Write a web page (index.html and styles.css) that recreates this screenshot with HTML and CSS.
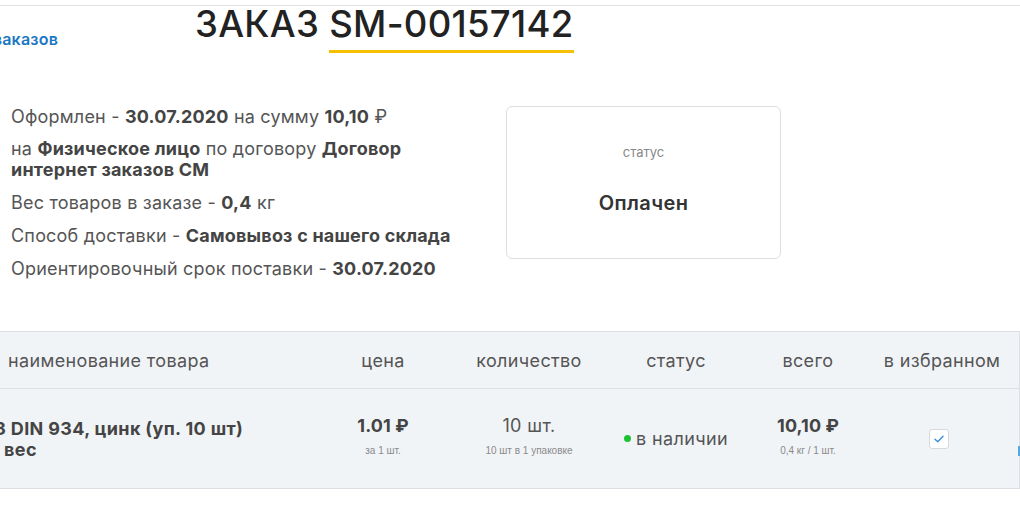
FILE: index.html
```html
<!DOCTYPE html>
<html lang="ru">
<head>
<meta charset="utf-8">
<title>Заказ SM-00157142</title>
<link rel="stylesheet" href="styles.css">
</head>
<body>
<div class="topbar"></div>
<div class="head">
  <div class="back"><a href="#">Вернуться к списку заказов</a></div>
  <h1 class="title">ЗАКАЗ <span class="num">SM-00157142</span></h1>
</div>

<div class="info">
  <div class="details">
    <p>Оформлен - <b>30.07.2020</b> на сумму <b>10,10</b> ₽</p>
    <p>на <b>Физическое лицо</b> по договору <b>Договор интернет заказов СМ</b></p>
    <p>Вес товаров в заказе - <b>0,4</b> кг</p>
    <p>Способ доставки - <b>Самовывоз с нашего склада</b></p>
    <p>Ориентировочный срок поставки - <b>30.07.2020</b></p>
  </div>
  <div class="status-card">
    <div class="status-label">статус</div>
    <div class="status-value">Оплачен</div>
  </div>
</div>

<div class="table">
  <div class="row head-row">
    <div class="cell c-name">наименование товара</div>
    <div class="cell c-price">цена</div>
    <div class="cell c-qty">количество</div>
    <div class="cell c-status">статус</div>
    <div class="cell c-total">всего</div>
    <div class="cell c-fav">в избранном</div>
  </div>
  <div class="row item-row">
    <div class="cell c-name">
      <div class="name-text">
        <div>Гайка М3 DIN 934, цинк (уп. 10 шт)</div>
        <div>Гайка на вес</div>
      </div>
    </div>
    <div class="cell c-price stack">
      <div class="big bold">1.01 ₽</div>
      <div class="small">за 1 шт.</div>
    </div>
    <div class="cell c-qty stack">
      <div class="big">10 шт.</div>
      <div class="small">10 шт в 1 упаковке</div>
    </div>
    <div class="cell c-status">
      <span class="dot"></span><span class="avail">в наличии</span>
    </div>
    <div class="cell c-total stack">
      <div class="big bold">10,10 ₽</div>
      <div class="small">0,4 кг / 1 шт.</div>
    </div>
    <div class="cell c-fav">
      <span class="check">
        <svg width="10" height="8" viewBox="0 0 10 8"><path d="M1 4.2 L3.8 6.8 L9 1.2" fill="none" stroke="#3b8fd6" stroke-width="1.4" stroke-linecap="round" stroke-linejoin="round"/></svg>
      </span>
    </div>
    <span class="edge-tab"></span>
  </div>
</div>
</body>
</html>
```

FILE: styles.css
```css
* { box-sizing: border-box; }
html, body { margin: 0; padding: 0; }
body {
  width: 1020px;
  height: 521px;
  overflow: hidden;
  background: #fff;
  font-family: "Inter", "Open Sans", "Liberation Sans", sans-serif;
  color: #555;
}

.topbar {
  height: 6px;
  border-bottom: 1px solid #e2e2e2;
}

.head {
  display: flex;
  align-items: flex-start;
  height: 58px;
}
.back {
  width: 58px;
  display: flex;
  justify-content: flex-end;
  white-space: nowrap;
  padding-top: 23px;
}
.back a {
  color: #1b78c2;
  font-weight: 600;
  font-size: 16px;
  letter-spacing: 0.2px;
  text-decoration: none;
}
.title {
  margin: 0 0 0 137px;
  font-size: 36.5px;
  font-weight: 500;
  line-height: 36px;
  color: #222;
  letter-spacing: 0.3px;
  white-space: nowrap;
}
.title .num {
  display: inline-block;
  border-bottom: 3px solid #f6c000;
  padding-bottom: 8px;
}

.info {
  display: flex;
  align-items: flex-start;
  padding-top: 42px;
  height: 267px;
}
.details {
  width: 480px;
  padding-left: 11px;
  font-size: 18px;
  letter-spacing: 0.2px;
  line-height: 21px;
  color: #555;
}
.details p { margin: 0 0 12px; }
.details p:first-child { margin-bottom: 11px; }
.details b { font-weight: 700; color: #444; }

.status-card {
  margin-left: 26px;
  width: 275px;
  height: 153px;
  border: 1px solid #dedede;
  border-radius: 6px;
  display: flex;
  flex-direction: column;
  align-items: center;
  padding-top: 37px;
}
.status-label {
  font-size: 13px;
  color: #888;
}
.status-value {
  margin-top: 31px;
  font-size: 20px;
  letter-spacing: 0.4px;
  font-weight: 600;
  color: #333;
}

.table {
  margin-left: -20px;
  width: 1040px;
  background: #f1f4f7;
  border-top: 1px solid #dcdfe3;
  border-right: 1px solid #dcdfe3;
}
.row {
  display: flex;
  border-bottom: 1px solid #dcdfe3;
  position: relative;
}
.head-row { height: 57px; }
.item-row { height: 100px; }
.cell {
  display: flex;
  align-items: center;
  justify-content: center;
  white-space: nowrap;
  font-size: 18px;
  letter-spacing: 0.35px;
  color: #555;
}
.c-name { width: 350px; justify-content: flex-start; padding-left: 28px; }
.c-price { width: 106px; }
.c-qty { width: 186px; }
.c-status { width: 108px; }
.c-total { width: 156px; }
.c-fav { width: 133px; padding-right: 21px; }

.name-text {
  margin-left: -89px;
  font-weight: 700;
  color: #444;
  line-height: 21px;
  margin-top: 1px;
}
.stack {
  flex-direction: column;
  justify-content: flex-start;
  padding-top: 26px;
}
.big { font-size: 18px; line-height: 22px; }
.bold { font-weight: 700; color: #444; letter-spacing: 0.1px; }
.small {
  margin-top: 8px;
  font-family: "Liberation Sans", Arial, sans-serif;
  font-size: 10px;
  letter-spacing: 0;
  color: #8a8a8a;
}
.dot {
  width: 7px;
  height: 7px;
  border-radius: 50%;
  background: #1cc232;
  margin-right: 5px;
}
.avail { font-size: 18px; }
.check {
  width: 20px;
  height: 20px;
  margin-right: 6px;
  background: #fff;
  border: 1px solid #d6d9dd;
  border-radius: 3px;
  display: flex;
  align-items: center;
  justify-content: center;
}
.edge-tab {
  position: absolute;
  right: -1px;
  top: 57px;
  width: 2px;
  height: 10px;
  background: #5aa7e0;
}
```
